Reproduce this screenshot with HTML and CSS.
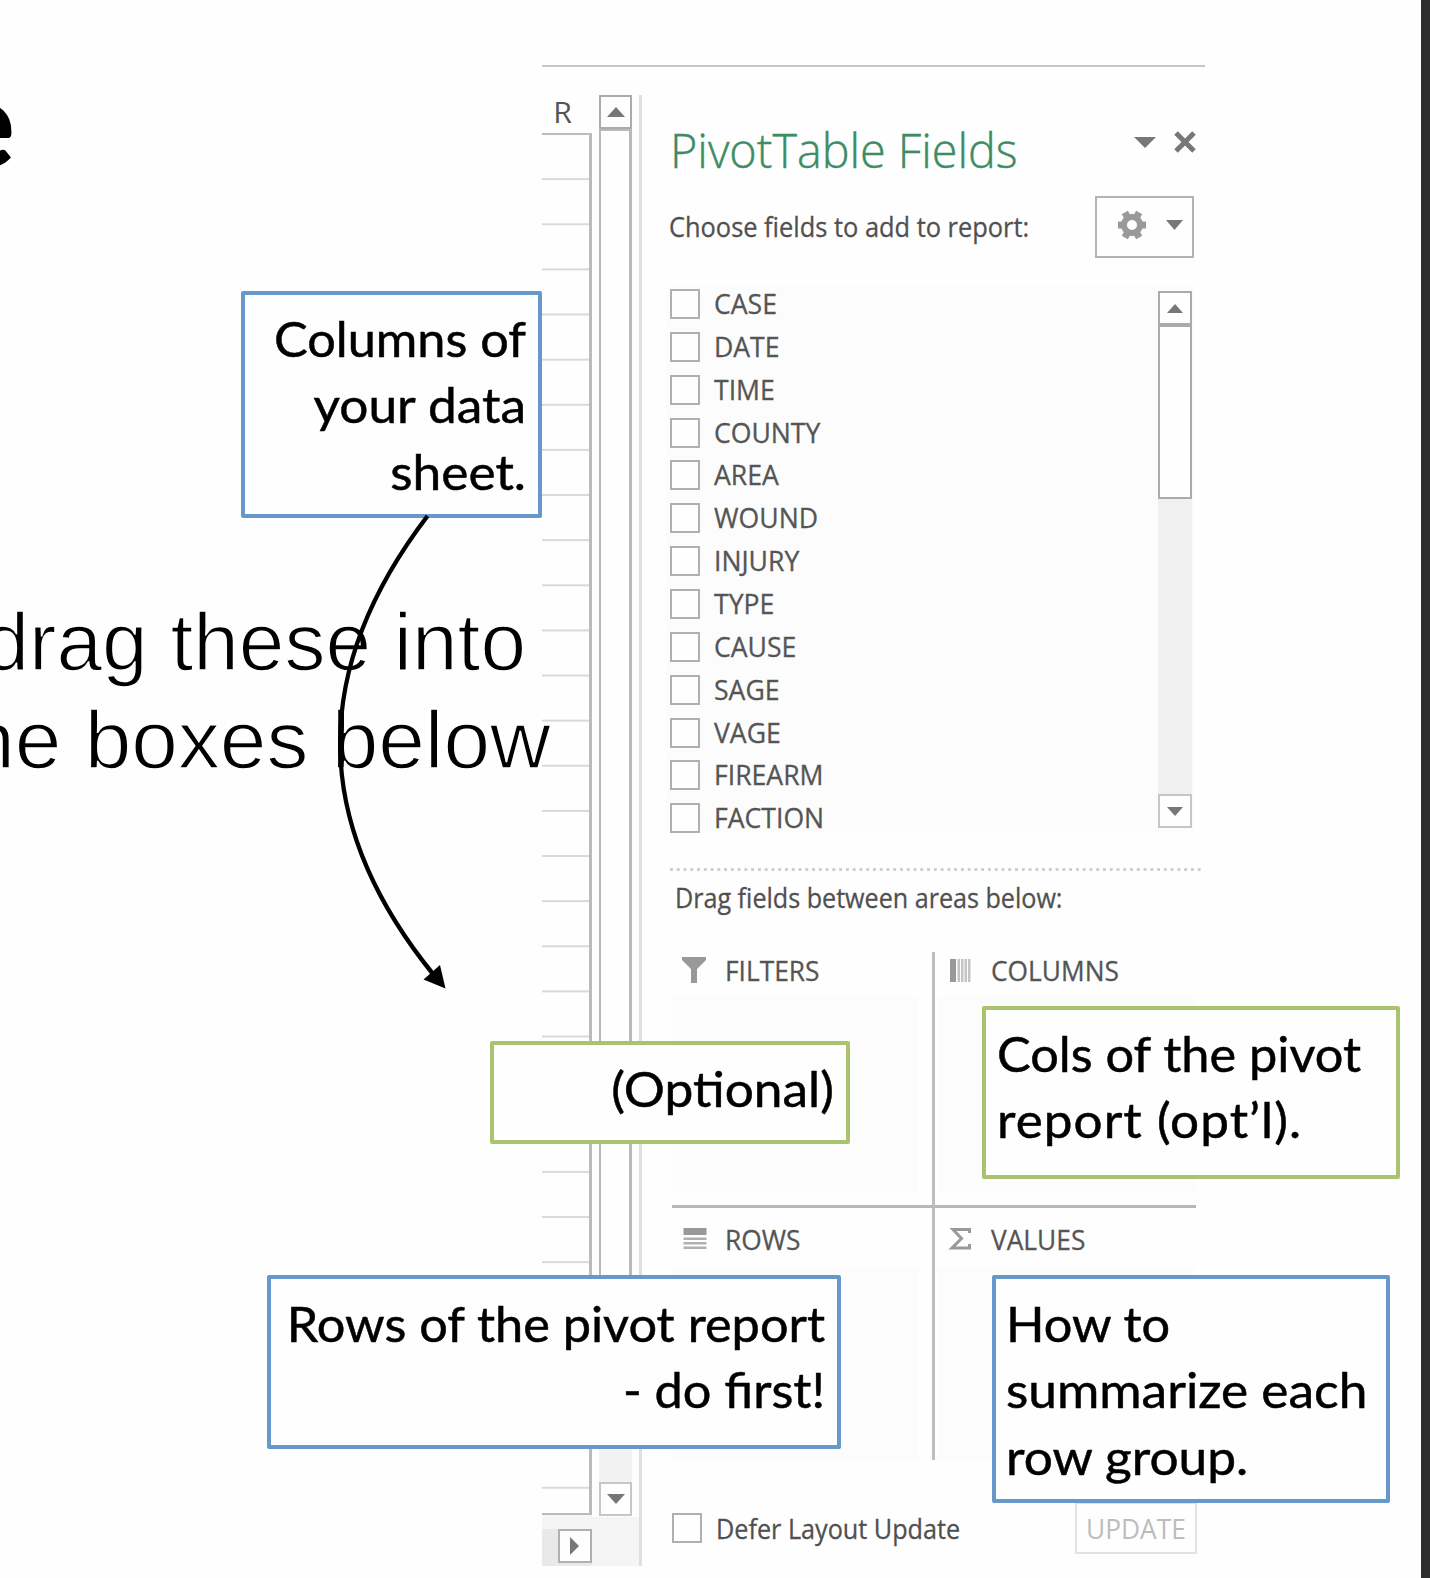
FILE: index.html
```html
<!DOCTYPE html>
<html lang="en">
<head>
<meta charset="utf-8">
<title>PivotTable Fields</title>
<link rel="stylesheet" href="styles.css">
</head>
<body>
<main class="slide">
  <h1 class="slide-title">e</h1>

  <section class="snapshot">
    <div class="sheet">
      <div class="col-head"><span>R</span></div>
      <div class="cells"></div>
      <div class="sheet-foot">
        <div class="btn btn-next"><svg width="10" height="18" viewBox="0 0 10 18"><path d="M0 0L9 9L0 18Z"/></svg></div>
      </div>
    </div>
    <div class="sheet-scroll">
      <div class="btn"><svg width="18" height="10" viewBox="0 0 18 10"><path d="M0 10L9 0L18 10Z"/></svg></div>
      <div class="thumb"></div>
      <div class="track"></div>
      <div class="btn soft"><svg width="18" height="10" viewBox="0 0 18 10"><path d="M0 0L9 10L18 0Z"/></svg></div>
      <div class="corner"></div>
    </div>

    <div class="pane">
      <header class="pane-head">
        <h2><span>PivotTable Fields</span></h2>
        <svg class="menu" width="22" height="11" viewBox="0 0 22 11"><path d="M0 0H22L11 11Z"/></svg>
        <svg class="close" width="24" height="24" viewBox="0 0 24 24"><path d="M3 3L21 21M21 3L3 21"/></svg>
      </header>
      <div class="choose">
        <p class="ui"><span class="choose-text">Choose fields to add to report:</span></p>
        <div class="tools">
          <svg class="gear" width="30" height="30" viewBox="-15 -15 30 30">
            <g class="teeth"><path d="M-14 0H14"/><path d="M-7.200 -12.400L7.200 12.400"/><path d="M7.200 -12.400L-7.200 12.400"/></g>
            <circle r="8"/>
          </svg>
          <svg width="17" height="10" viewBox="0 0 17 10"><path d="M0 0H17L8.500 10Z"/></svg>
        </div>
      </div>

      <div class="fields">
        <ul>
          <li><i class="check"></i><span>CASE</span></li>
          <li><i class="check"></i><span>DATE</span></li>
          <li><i class="check"></i><span>TIME</span></li>
          <li><i class="check"></i><span>COUNTY</span></li>
          <li><i class="check"></i><span>AREA</span></li>
          <li><i class="check"></i><span>WOUND</span></li>
          <li><i class="check"></i><span>INJURY</span></li>
          <li><i class="check"></i><span>TYPE</span></li>
          <li><i class="check"></i><span>CAUSE</span></li>
          <li><i class="check"></i><span>SAGE</span></li>
          <li><i class="check"></i><span>VAGE</span></li>
          <li><i class="check"></i><span>FIREARM</span></li>
          <li><i class="check"></i><span>FACTION</span></li>
        </ul>
        <div class="list-scroll">
          <div class="btn"><svg width="16" height="9" viewBox="0 0 16 9"><path d="M0 9L8 0L16 9Z"/></svg></div>
          <div class="thumb"></div>
          <div class="track"></div>
          <div class="btn soft"><svg width="16" height="9" viewBox="0 0 16 9"><path d="M0 0L8 9L16 0Z"/></svg></div>
        </div>
      </div>

      <div class="dots"></div>
      <p class="ui drag"><span>Drag fields between areas below:</span></p>

      <div class="areas">
        <div class="area">
          <h3><svg width="26" height="26" viewBox="0 0 26 26"><path d="M0 0H24V3L15 12V26H9V12L0 3Z"/></svg><span>FILTERS</span></h3>
          <div class="drop"></div>
        </div>
        <div class="area">
          <h3><svg width="26" height="26" viewBox="0 0 26 26"><path class="dim" d="M2 2h6v23H2z"/><path class="pale" d="M9.500 2h2.500v23H9.500zM13 2h2.500v23H13zM16.500 2h2.500v23h-2.500zM20 2h2.500v23H20z"/></svg><span>COLUMNS</span></h3>
          <div class="drop"></div>
        </div>
        <div class="area low">
          <h3><svg width="26" height="26" viewBox="0 0 26 26"><path class="dim" d="M1.500 3h23v7h-23z"/><path class="mid" d="M1.500 12.500h23v2.500h-23zM1.500 17h23v2.500h-23zM1.500 21.500h23v2.500h-23z"/></svg><span>ROWS</span></h3>
          <div class="drop"></div>
        </div>
        <div class="area low">
          <h3><svg width="26" height="26" viewBox="0 0 26 26"><path class="sigma" d="M21.500 8V4.500H5L13.500 13.500L4 23H21.500V19"/></svg><span>VALUES</span></h3>
          <div class="drop"></div>
        </div>
      </div>

      <footer class="defer">
        <i class="check"></i>
        <p class="ui"><span>Defer Layout Update</span></p>
        <div class="update"><span>UPDATE</span></div>
      </footer>
    </div>
  </section>

  <p class="note"><span class="into">drag these into</span><span class="below">the boxes below</span></p>

  <div class="callout blue right c-columns"><p>Columns of</p><p class="wide">your data</p><p class="wide">sheet.</p></div>
  <div class="callout green right c-filters"><p class="wide">(Optional)</p></div>
  <div class="callout green c-cols"><p>Cols of the pivot</p><p class="spaced">report (opt’l).</p></div>
  <div class="callout blue right c-rows"><p>Rows of the pivot report</p><p>- do first!</p></div>
  <div class="callout blue c-values"><p>How to</p><p class="wide">summarize each</p><p class="wide">row group.</p></div>

  <svg class="arrow" width="130" height="490" viewBox="330 505 130 490">
    <path class="curve" d="M427.500 516C310 670 310 822 433 974"/>
    <path d="M445.500 988.500L423.500 979.500L440 965Z"/>
  </svg>
  <div class="edge"></div>
</main>
</body>
</html>
```
FILE: styles.css
```css
* { box-sizing: border-box; }
body { margin: 0; background: #fff; }
h1, h2, h3, p, ul { margin: 0; padding: 0; font-weight: 400; }
svg { display: block; flex: none; }

.slide {
  position: relative;
  width: 1430px;
  height: 1578px;
  overflow: hidden;
  background: #fefefe;
  color: #000;
}
.slide-title {
  position: absolute;
  right: 1415px;
  top: 54px;
  font: 900 122px/132px Lato, sans-serif;
}
.note {
  position: absolute;
  right: 879px;
  top: 593px;
  font: 82px/98px "Liberation Sans", Arial, sans-serif;
  white-space: nowrap;
  text-align: right;
  -webkit-text-stroke: 1.5px #fefefe;
}
.note span { display: block; transform-origin: 100% 0; }
.note .into { padding-right: 25px; }
.note .below { transform: scaleX(1.022); }
.edge {
  position: absolute;
  right: 0;
  top: 0;
  width: 9px;
  height: 100%;
  background: #2f2f2f;
}

/* spreadsheet snapshot */
.snapshot {
  position: absolute;
  left: 542px;
  top: 65px;
  width: 663px;
  height: 1501px;
  padding-top: 28px;
  border-top: 2px solid #c6c6c6;
  display: grid;
  grid-template-columns: 50px 47px 566px;
  font-family: "Open Sans", "Noto Sans", sans-serif;
  color: #555;
}
.sheet { display: flex; flex-direction: column; }
.col-head {
  height: 38px;
  padding-left: 12px;
  font-size: 28px;
  line-height: 34px;
}
.col-head span { display: inline-block; transform: scale(1.08, 1.04); }
.cells {
  height: 1382px;
  border: solid #bbb;
  border-width: 2px 3px 2px 0;
  background: linear-gradient(transparent 43px, #d9d9d9 43px) 0 0 / 100% 45.140px;
}
.sheet-foot {
  flex: 1;
  display: flex;
  justify-content: flex-end;
  align-items: flex-start;
  margin-top: 14px;
  background: #e9e9e9;
  box-shadow: 0 -14px #f5f5f5;
}
.btn {
  flex: none;
  display: flex;
  align-items: center;
  justify-content: center;
  height: 34px;
  border: 2px solid #ababab;
  background: #fefefe;
}
.btn svg { fill: #777; }
.btn.soft { border-color: #c6c6c6; }
.btn-next { width: 34px; border-color: #b0b0b0; }
.sheet-scroll {
  display: flex;
  flex-direction: column;
  padding-left: 7px;
  padding-right: 7px;
}
.sheet-scroll .thumb { height: 1290px; border: 2px solid #b9b9b9; border-width: 2px 3px 2px 2px; }
.sheet-scroll .track { flex: 1; background: #f2f2f2; }
.corner { height: 49px; margin: 1px -7px 0 -7px; background: #f5f5f5; }

/* field pane */
.pane { border-left: 3px solid #e0e0e0; padding-left: 28px; height: 1471px; }
.pane-head { display: flex; height: 98px; padding-top: 20px; }
.pane-head h2 { width: 463px; padding-top: 3px; font-size: 47px; font-weight: 300; line-height: 64px; white-space: nowrap; color: #3d8c63; -webkit-text-stroke: .4px #3d8c63; }
h2 span, h3 span, .ui span, .fields li span, .update span { display: inline-block; transform-origin: 0 50%; white-space: nowrap; }
h2 span { transform: scaleX(.994); }
.menu { margin: 22px 0 0 1px; fill: #777; }
.close { margin: 15px 0 0 17px; fill: none; stroke: #777; stroke-width: 5; }

.choose { display: flex; align-items: flex-start; height: 93px; }
.ui { font-size: 28px; line-height: 40px; color: #505050; -webkit-text-stroke: .3px #505050; }
.choose .ui { width: 425px; padding-top: 13px; margin-left: -1px; }
.choose-text { transform: scaleX(.907); }
.tools {
  width: 99px;
  height: 62px;
  margin-top: 3px;
  margin-left: 1px;
  border: 2px solid #b3b3b3;
  display: flex;
  align-items: center;
  gap: 19px;
  padding: 0 0 4px 20px;
}
.tools svg { fill: #777; }
.tools svg.gear { fill: none; stroke: #999; stroke-width: 6; }
.gear circle { fill: #fefefe; }
.teeth { stroke-width: 7; }

.fields {
  display: flex;
  justify-content: space-between;
  height: 546px;
  margin-left: -4px;
  padding-left: 4px;
  width: 528px;
  background: #fcfcfc;
}
.fields ul { list-style: none; margin-top: -4px; }
.fields li { display: flex; align-items: center; height: 42.860px; font-size: 28px; line-height: 42.860px; -webkit-text-stroke: .3px #555; }
.fields li .check { margin-right: 14px; margin-top: 1px; }
.fields li span { transform: scaleX(.95); }
.check { flex: none; width: 30px; height: 30px; border: 2px solid #b0b0b0; background: #fefefe; }
.list-scroll { width: 34px; display: flex; flex-direction: column; margin: 5px 2px 4px 0; }
.list-scroll .thumb { height: 174px; border: 2px solid #ababab; background: #fefefe; }
.list-scroll .track { flex: 1; background: #f0f0f0; }

.dots { width: 532px; height: 3px; margin-top: 36px; background: linear-gradient(90deg, #cfcfcf 3px, transparent 3px) 0 0 / 6.780px 100%; }
.drag { margin: 6px 0 0 5px; }
.drag span { transform: scaleX(.897); }

.areas {
  display: grid;
  grid-template-columns: 263px 261px;
  grid-template-rows: 256px 252px;
  margin: 35px 0 0 2px;
  width: 524px;
}
.area { display: flex; flex-direction: column; border-bottom: 3px solid #b8b8b8; }
.area:nth-child(odd) { border-right: 3px solid #bfbfbf; padding-right: 14px; }
.area:nth-child(even) { padding-left: 3px; }
.area.low { border-bottom: 0; }
.area h3 { display: flex; align-items: center; gap: 17px; height: 45px; padding: 0 0 9px 10px; font-size: 28px; line-height: 38px; -webkit-text-stroke: .3px #555; }
.area h3 svg { fill: #999; margin-top: -1px; }
.area.low h3 { height: 59px; padding-top: 9px; padding-bottom: 7px; }
.area h3 span { transform: scaleX(.94); }
svg .dim { fill: #999; }
svg .mid { fill: #b0b0b0; }
svg .pale { fill: #c4c4c4; }
svg .sigma { fill: none; stroke: #999; stroke-width: 3; }
.drop { flex: 1; margin-bottom: 13px; background: #fcfcfc; }
.low .drop { margin-bottom: 0; }

.defer { display: flex; margin: 43px 0 0 2px; }
.defer .check { margin-top: 10px; }
.defer .ui { width: 358px; padding: 5px 0 0 14px; }
.defer .ui span { transform: scaleX(.9); }
.update { width: 122px; height: 52px; margin: -1px 0 0 15px; border: 2px solid #e2e2e2; padding: 2px 0 0 9px; font-size: 28px; line-height: 44px; color: #bdbdbd; }
.update span { transform: scaleX(.94); }

/* callouts */
.callout {
  position: absolute;
  padding: 10px;
  border: 4px solid #6699c9;
  border-radius: 2px;
  background: #fefefe;
  font: 49px/66.300px Lato, sans-serif;
  white-space: nowrap;
  -webkit-text-stroke: .5px #000;
}
.callout p { transform: scaleX(1.03); transform-origin: 0 0; }
.callout p.wide { transform: scaleX(1.05); }
.callout p.spaced { letter-spacing: 1px; transform: scaleX(1.046); }
.callout.right { text-align: right; padding-right: 12px; }
.callout.right p { transform-origin: 100% 0; }
.callout.green { border-color: #a9c36f; }
.c-columns { left: 241px; top: 291px; width: 301px; height: 227px; }
.c-filters { left: 490px; top: 1041px; width: 360px; height: 103px; }
.c-cols { left: 982px; top: 1006px; width: 418px; height: 173px; padding-left: 11px; }
.c-rows { left: 267px; top: 1275px; width: 574px; height: 174px; padding-top: 11px; }
.c-values { left: 992px; top: 1275px; width: 398px; height: 228px; padding-top: 11px; }

.arrow { position: absolute; left: 330px; top: 505px; }
.arrow .curve { fill: none; stroke: #000; stroke-width: 4.400; }
```
